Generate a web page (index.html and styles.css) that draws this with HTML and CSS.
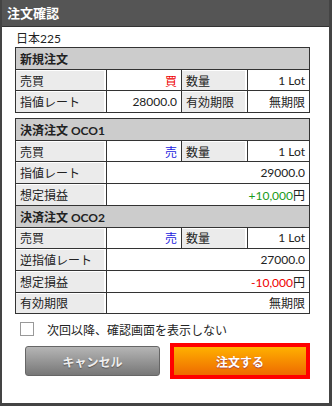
FILE: index.html
```html
<!DOCTYPE html>
<html lang="ja">

<head>
    <meta charset="UTF-8">
    <meta name="viewport" content="width=device-width, initial-scale=1.0">
    <title>注文確認</title>
    <link rel="stylesheet" href="styles.css">
</head>

<body>
    <div class="dialog">
        <div class="dialog-title">注文確認</div>

        <div class="dialog-body">
            <div class="symbol">日本225</div>

            <table class="order-table">
                <colgroup>
                    <col class="c1">
                    <col class="c2">
                    <col class="c3">
                    <col class="c4">
                </colgroup>
                <tr>
                    <th colspan="4">新規注文</th>
                </tr>
                <tr>
                    <td class="label">売買</td>
                    <td class="value buy">買</td>
                    <td class="label">数量</td>
                    <td class="value">1 Lot</td>
                </tr>
                <tr>
                    <td class="label">指値レート</td>
                    <td class="value">28000.0</td>
                    <td class="label">有効期限</td>
                    <td class="value">無期限</td>
                </tr>
            </table>

            <table class="order-table second">
                <colgroup>
                    <col class="c1">
                    <col class="c2">
                    <col class="c3">
                    <col class="c4">
                </colgroup>
                <tr>
                    <th colspan="4">決済注文 OCO1</th>
                </tr>
                <tr>
                    <td class="label">売買</td>
                    <td class="value sell">売</td>
                    <td class="label">数量</td>
                    <td class="value">1 Lot</td>
                </tr>
                <tr>
                    <td class="label">指値レート</td>
                    <td class="value" colspan="3">29000.0</td>
                </tr>
                <tr>
                    <td class="label">想定損益</td>
                    <td class="value" colspan="3"><span class="plus">+10,000</span>円</td>
                </tr>
                <tr>
                    <th colspan="4">決済注文 OCO2</th>
                </tr>
                <tr>
                    <td class="label">売買</td>
                    <td class="value sell">売</td>
                    <td class="label">数量</td>
                    <td class="value">1 Lot</td>
                </tr>
                <tr>
                    <td class="label">逆指値レート</td>
                    <td class="value" colspan="3">27000.0</td>
                </tr>
                <tr>
                    <td class="label">想定損益</td>
                    <td class="value" colspan="3"><span class="minus">-10,000</span>円</td>
                </tr>
                <tr>
                    <td class="label">有効期限</td>
                    <td class="value" colspan="3">無期限</td>
                </tr>
            </table>

            <label class="skip">
                <span class="checkbox"></span>
                次回以降、確認画面を表示しない
            </label>

            <div class="buttons">
                <button class="btn cancel">キャンセル</button>
                <div class="submit-wrap">
                    <button class="btn submit">注文する</button>
                </div>
            </div>
        </div>
    </div>
</body>

</html>
```

FILE: styles.css
```css
body {
    margin: 0;
    font-family: Lato, "Noto Sans CJK JP", sans-serif;
    font-size: 12px;
    color: #222;
    background-color: #fff;
}

.dialog {
    width: 332px;
    height: 406px;
    box-sizing: border-box;
    border: 2px solid #444;
    border-width: 0 3px 3px 2px;
    background-color: #fff;
}

.dialog-title {
    height: 27px;
    line-height: 27px;
    padding-left: 5px;
    background-color: #555;
    color: #fff;
    font-size: 13px;
    font-weight: bold;
    border-bottom: 1px solid #333;
    box-sizing: border-box;
}

.dialog-body {
    padding: 4px 19px 0 13px;
}

.symbol {
    line-height: 16px;
    padding-left: 1px;
}

.order-table {
    width: 295px;
    border-collapse: collapse;
    table-layout: fixed;
    border: 1px solid #333;
}

.order-table.second {
    margin-top: 5px;
}

.c1 {
    width: 91px;
}

.c2 {
    width: 75px;
}

.c3 {
    width: 66px;
}

.order-table th,
.order-table td {
    height: 20.7px;
    padding: 0 4px;
    border: 1px solid #333;
    white-space: nowrap;
}

.order-table th {
    background-color: #ccc;
    text-align: left;
    font-weight: bold;
}

.order-table td.label {
    background-color: #ebebeb;
    box-shadow: inset -2px 0 0 #fff, inset 0 1px 0 #fff;
}

.order-table td.value {
    text-align: right;
}

.buy {
    color: #e00;
}

.sell {
    color: #22d;
}

.plus {
    color: #1a9a1a;
}

.minus {
    color: #e00;
}

.skip {
    display: flex;
    align-items: center;
    gap: 13px;
    margin: 8px 0 0 5px;
    height: 14px;
}

.checkbox {
    width: 12px;
    height: 12px;
    border: 1px solid #999;
    background-color: #fff;
}

.buttons {
    display: flex;
    justify-content: space-between;
    align-items: center;
    margin-top: 7px;
    padding-left: 10px;
}

.btn {
    font-family: "Noto Sans CJK JP", sans-serif;
    font-size: 12px;
    font-weight: bold;
    color: #fff;
    border: none;
    cursor: pointer;
}

.cancel {
    width: 135px;
    height: 30px;
    border: 1px solid #666;
    border-radius: 3px;
    background: linear-gradient(#b5b5b5, #777);
    color: #eee;
    text-shadow: 0 1px 1px #555;
}

.submit-wrap {
    border: 4px solid #f00;
}

.submit {
    display: block;
    width: 132px;
    height: 28px;
    background: linear-gradient(#ffb000, #ee6a00);
    text-shadow: 0 1px 1px #a44;
}
```
